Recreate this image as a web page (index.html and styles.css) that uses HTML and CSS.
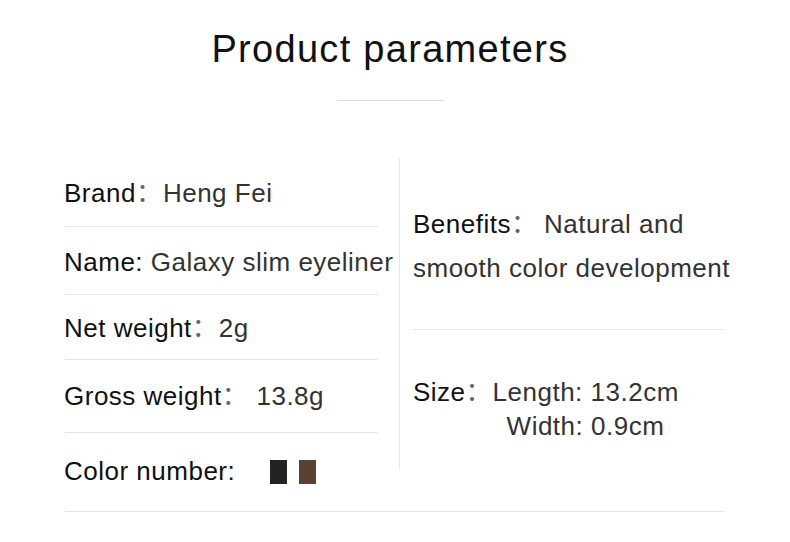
FILE: index.html
```html
<!DOCTYPE html>
<html>
<head>
<meta charset="utf-8">
<link rel="stylesheet" href="styles.css">
</head>
<body>
<div class="page">
  <header class="head">
    <h1 class="title">Product parameters</h1>
    <div class="title-rule"></div>
  </header>
  <section class="params">
    <div class="col-left">
      <div class="row row-1"><span class="lbl">Brand<span class="fc">：</span></span><span class="val">Heng Fei</span></div>
      <div class="row row-2"><span class="lbl">Name:</span><span class="val"> Galaxy slim eyeliner</span></div>
      <div class="row row-3"><span class="lbl">Net weight<span class="fc">：</span></span><span class="val">2g</span></div>
      <div class="row row-4"><span class="lbl">Gross weight<span class="fc">：</span></span><span class="val"> 13.8g</span></div>
      <div class="row row-5"><span class="lbl">Color number:</span><span class="swatches"><span class="sw sw-black"></span><span class="sw sw-brown"></span></span></div>
    </div>
    <div class="vline"></div>
    <div class="col-right">
      <div class="block block-benefits"><span class="lbl">Benefits<span class="fc">：</span></span><span class="val val-benefits">Natural and<br>smooth color development</span></div>
      <div class="block block-size">
        <span class="lbl">Size<span class="fc">：</span></span>
        <span class="size-vals"><span class="val size-l">Length: 13.2cm</span><span class="val size-w">Width: 0.9cm</span></span>
      </div>
    </div>
  </section>
</div>
</body>
</html>
```

FILE: styles.css
```css
html, body {
  margin: 0;
  padding: 0;
  background: #ffffff;
}
body {
  width: 790px;
  height: 542px;
  overflow: hidden;
  font-family: "Liberation Sans", "Noto Sans CJK SC", Arial, sans-serif;
}
.page {
  width: 790px;
}
.head {
  display: flex;
  flex-direction: column;
  align-items: center;
  padding-top: 30px;
  padding-right: 10px;
}
.title {
  margin: 0;
  font-size: 38px;
  line-height: 38px;
  font-weight: normal;
  letter-spacing: 1.3px;
  color: #111;
}
.title-rule {
  margin-top: 32px;
  width: 107px;
  height: 1px;
  background: #dcdcdc;
}
.params {
  display: flex;
  align-items: flex-start;
  width: 660px;
  margin: 57px 0 0 65px;
  border-bottom: 1px solid #e6e6e6;
}
.col-left {
  width: 313px;
  flex: none;
}
.row {
  font-size: 26px;
  line-height: 30px;
  letter-spacing: 0.5px;
  white-space: nowrap;
  border-bottom: 1px solid #e6e6e6;
  text-indent: -1px;
}
.row-1 { padding: 20px 0 18px; }
.row-2 { padding: 20px 0 17px; }
.row-3 { padding: 18px 0 16px; }
.row-4 { padding: 21px 0 21px; }
.row-5 { padding: 23px 0 25px; border-bottom: none; display: flex; align-items: center; }
.lbl {
  color: #111;
}
.val {
  color: #333;
}
.fc {
  font-family: "Noto Sans CJK SC", sans-serif;
  color: #666;
  font-size: 26px;
  line-height: 0;
  letter-spacing: 1px;
}
.swatches {
  display: flex;
  gap: 12px;
  margin-left: 35px;
  margin-top: 1px;
}
.sw {
  display: block;
  width: 17px;
  height: 24px;
}
.sw-black { background: #232323; }
.sw-brown { background: #5a4233; }
.vline {
  flex: none;
  width: 1px;
  height: 312px;
  background: #e8e8e8;
  margin-left: 21px;
}
.col-right {
  flex: none;
  width: 312px;
  margin-left: 13px;
}
.block {
  font-size: 26px;
  letter-spacing: 0.5px;
  white-space: nowrap;
}
.block-benefits {
  line-height: 44px;
  padding: 44px 0 39px;
  border-bottom: 1px solid #e6e6e6;
}
.val-benefits {
  margin-left: 6px;
}
.block-size {
  display: flex;
  line-height: 34px;
  padding-top: 45px;
}
.size-vals {
  display: flex;
  flex-direction: column;
}
.size-w {
  padding-left: 14px;
}
```
